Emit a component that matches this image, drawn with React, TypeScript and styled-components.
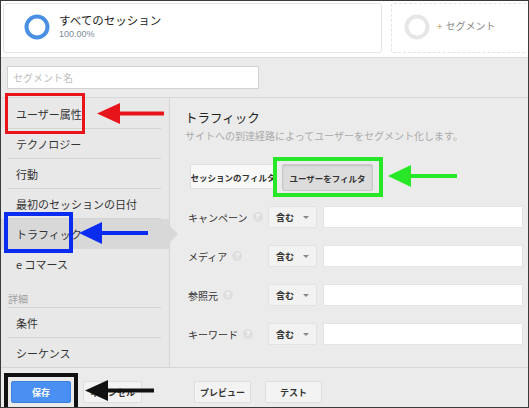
import React from "react";
import styled, { createGlobalStyle, css } from "styled-components";

const Global = createGlobalStyle`
  * { box-sizing: border-box; }
  html, body { margin: 0; padding: 0; background: #fff; }
  body { font-family: "Noto Sans CJK JP", "Noto Sans", sans-serif; }
`;

const Frame = styled.div`
  position: relative;
  width: 529px;
  height: 408px;
  border: 1px solid #3a3a3a;
  background: #ebebeb;
  overflow: hidden;
  display: flex;
  flex-direction: column;
  color: #333;
`;

const Header = styled.div`
  height: 57px;
  flex: none;
  background: #fff;
  border-bottom: 1px solid #dcdcdc;
  padding: 2px 0 4px 2px;
  display: flex;
  gap: 9px;
`;

const SegmentCard = styled.div<{ $add?: boolean }>`
  display: flex;
  align-items: center;
  gap: 9px;
  padding: 0 0 2px 20px;
  border-radius: 3px;
  ${(p) =>
    p.$add
      ? css`
          flex: 1;
          border: 1px dashed #e2e2e2;
          border-right: none;
          padding-left: 12px;
          gap: 7px;
        `
      : css`
          flex: 0 0 379px;
          border: 1px solid #e4e4e4;
          padding-left: 20px;
        `}
`;

const Ring = styled.svg`
  flex: none;
  display: block;
`;

const CardText = styled.div`
  display: flex;
  flex-direction: column;
  margin-top: -2px;
`;

const CardTitle = styled.div`
  font-size: 11.5px;
  line-height: 15px;
  color: #222;
`;

const CardSub = styled.div`
  font-family: "Liberation Sans", Arial, sans-serif;
  font-size: 9px;
  line-height: 12px;
  color: #7a8a99;
`;

const AddText = styled.div`
  font-size: 10px;
  color: #888;
  margin-top: -4px;
  span {
    color: #c9a47a;
    margin-right: 3px;
  }
`;

const NameRow = styled.div`
  flex: none;
  padding: 8px 6px;
`;

const NameInput = styled.div`
  width: 252px;
  height: 23px;
  background: #fff;
  border: 1px solid #d2d2d2;
  font-size: 10px;
  line-height: 21px;
  color: #bbb;
  padding-left: 5px;
`;

const Main = styled.div`
  flex: none;
  height: 270px;
  border-top: 1px solid #d6d6d6;
  display: flex;
`;

const Sidebar = styled.div`
  position: relative;
  z-index: 1;
  width: 169px;
  flex: none;
  background: #e8e8e8;
  border-right: 1px solid #d6d6d6;
  padding-top: 1px;
`;

const SideItem = styled.div<{ $active?: boolean }>`
  position: relative;
  height: 30px;
  padding: 0 8px 0 7px;
  display: flex;
  ${(p) =>
    p.$active &&
    css`
      background: #d8d8d8;
      &::after {
        content: "";
        position: absolute;
        top: 7px;
        right: -9px;
        border-left: 8px solid #d8d8d8;
        border-top: 8px solid transparent;
        border-bottom: 8px solid transparent;
      }
    `}
`;

const SideLabel = styled.div<{ $last?: boolean }>`
  flex: 1;
  display: flex;
  align-items: center;
  padding-left: 8px;
  font-size: 11px;
  color: #333;
  border-bottom: 1px solid ${(p) => (p.$last ? "transparent" : "#d4d4d4")};
`;

const SideSection = styled.div`
  margin: 6px 8px 0 7px;
  height: 23px;
  display: flex;
  align-items: flex-end;
  padding-bottom: 1px;
  font-size: 10px;
  color: #a0a0a0;
  border-bottom: 1px solid #d4d4d4;
`;

const Content = styled.div`
  flex: 1;
  background: #ebebeb;
  padding: 11px 5px 0 15px;
`;

const Title = styled.div`
  font-size: 12.5px;
  line-height: 17px;
  color: #222;
`;

const Subtitle = styled.div`
  margin-top: 3px;
  font-size: 10px;
  line-height: 14px;
  color: #aaa;
`;

const Toggle = styled.div`
  margin: 21px 0 0 5px;
  display: flex;
  align-items: flex-start;
  gap: 6px;
`;

const ToggleBtn = styled.div<{ $on?: boolean; $w: number }>`
  width: ${(p) => p.$w}px;
  height: ${(p) => (p.$on ? 27 : 25)}px;
  display: flex;
  align-items: center;
  justify-content: center;
  font-size: 8.5px;
  font-weight: 700;
  color: #333;
  border: 1px solid ${(p) => (p.$on ? "#c8c8c8" : "#dedede")};
  border-radius: 2px;
  background: ${(p) => (p.$on ? "#dcdcdc" : "#f8f8f8")};
  box-shadow: ${(p) => (p.$on ? "inset 0 1px 2px rgba(0,0,0,0.12)" : "none")};
  white-space: nowrap;
  overflow: hidden;
`;

const Fields = styled.div`
  margin: 15px 0 0 3px;
  display: flex;
  flex-direction: column;
  gap: 17px;
`;

const FieldRow = styled.div`
  display: flex;
  align-items: center;
  height: 22px;
`;

const FieldLabel = styled.div`
  width: 80px;
  flex: none;
  display: flex;
  align-items: center;
  gap: 5px;
  font-size: 10px;
  color: #333;
`;

const Help = styled.span`
  width: 10px;
  height: 10px;
  border-radius: 50%;
  background: #dedede;
  color: #fff;
  font-family: "Liberation Sans", Arial, sans-serif;
  font-size: 7px;
  font-weight: 700;
  line-height: 10px;
  text-align: center;
`;

const Select = styled.div`
  width: 49px;
  height: 22px;
  flex: none;
  display: flex;
  align-items: center;
  justify-content: space-between;
  padding: 0 7px 0 7px;
  background: #f2f2f2;
  border: 1px solid #e2e2e2;
  border-radius: 2px;
  font-size: 9px;
  font-weight: 700;
  color: #333;
`;

const Caret = styled.span`
  width: 0;
  height: 0;
  border-left: 3px solid transparent;
  border-right: 3px solid transparent;
  border-top: 3px solid #888;
`;

const TextInput = styled.div`
  margin-left: 6px;
  flex: 1;
  height: 22px;
  background: #fff;
  border: 1px solid #e4e4e4;
`;

const Footer = styled.div`
  flex: 1;
  border-top: 1px solid #d6d6d6;
  padding: 13px 0 0 10px;
  display: flex;
  align-items: flex-start;
`;

const FootBtn = styled.div<{ $primary?: boolean; $w: number; $ml: number }>`
  width: ${(p) => p.$w}px;
  margin-left: ${(p) => p.$ml}px;
  height: 22px;
  display: flex;
  align-items: center;
  justify-content: center;
  font-size: 9px;
  font-weight: 700;
  border-radius: 2px;
  ${(p) =>
    p.$primary
      ? css`
          background: #4a8ff2;
          border: 1px solid #3d7fe0;
          color: #fff;
        `
      : css`
          background: #f3f3f3;
          border: 1px solid #dedede;
          color: #333;
        `}
`;

const Box = styled.div<{ $c: string; $x: number; $y: number; $w: number; $h: number; $b: number }>`
  position: absolute;
  left: ${(p) => p.$x}px;
  top: ${(p) => p.$y}px;
  width: ${(p) => p.$w}px;
  height: ${(p) => p.$h}px;
  border: ${(p) => p.$b}px solid ${(p) => p.$c};
  z-index: 5;
`;

const ArrowSvg = styled.svg<{ $x: number; $y: number }>`
  position: absolute;
  left: ${(p) => p.$x}px;
  top: ${(p) => p.$y}px;
  z-index: 5;
  overflow: visible;
`;

function Arrow({ x, y, w, h, color }: { x: number; y: number; w: number; h: number; color: string }) {
  const head = 23;
  const mid = h / 2;
  return (
    <ArrowSvg $x={x} $y={y} width={w} height={h} viewBox={`0 0 ${w} ${h}`}>
      <polygon points={`0,${mid} ${head},0 ${head},${h}`} fill={color} />
      <rect x={head - 1} y={mid - 2} width={w - head + 1} height={4} fill={color} />
    </ArrowSvg>
  );
}

const fields = ["キャンペーン", "メディア", "参照元", "キーワード"];

export default function App() {
  return (
    <>
      <Global />
      <Frame>
        <Header>
          <SegmentCard>
            <Ring width="26" height="26" viewBox="0 0 26 26">
              <circle cx="13" cy="13" r="10.5" fill="none" stroke="#4a90e2" strokeWidth="4" />
            </Ring>
            <CardText>
              <CardTitle>すべてのセッション</CardTitle>
              <CardSub>100.00%</CardSub>
            </CardText>
          </SegmentCard>
          <SegmentCard $add>
            <Ring width="26" height="26" viewBox="0 0 26 26">
              <circle cx="13" cy="13" r="10.5" fill="none" stroke="#e6e6e6" strokeWidth="4" />
            </Ring>
            <AddText>
              <span>+</span>セグメント
            </AddText>
          </SegmentCard>
        </Header>
        <NameRow>
          <NameInput>セグメント名</NameInput>
        </NameRow>
        <Main>
          <Sidebar>
            <SideItem><SideLabel>ユーザー属性</SideLabel></SideItem>
            <SideItem><SideLabel>テクノロジー</SideLabel></SideItem>
            <SideItem><SideLabel>行動</SideLabel></SideItem>
            <SideItem><SideLabel>最初のセッションの日付</SideLabel></SideItem>
            <SideItem $active><SideLabel $last>トラフィック</SideLabel></SideItem>
            <SideItem><SideLabel $last>e コマース</SideLabel></SideItem>
            <SideSection>詳細</SideSection>
            <SideItem><SideLabel>条件</SideLabel></SideItem>
            <SideItem><SideLabel $last>シーケンス</SideLabel></SideItem>
          </Sidebar>
          <Content>
            <Title>トラフィック</Title>
            <Subtitle>サイトへの到達経路によってユーザーをセグメント化します。</Subtitle>
            <Toggle>
              <ToggleBtn $w={86}>セッションのフィルタ</ToggleBtn>
              <ToggleBtn $w={91} $on>ユーザーをフィルタ</ToggleBtn>
            </Toggle>
            <Fields>
              {fields.map((f) => (
                <FieldRow key={f}>
                  <FieldLabel>
                    {f}
                    <Help>?</Help>
                  </FieldLabel>
                  <Select>
                    含む
                    <Caret />
                  </Select>
                  <TextInput />
                </FieldRow>
              ))}
            </Fields>
          </Content>
        </Main>
        <Footer>
          <FootBtn $primary $w={60} $ml={0}>保存</FootBtn>
          <FootBtn $w={59} $ml={12}>キャンセル</FootBtn>
          <FootBtn $w={57} $ml={52}>プレビュー</FootBtn>
          <FootBtn $w={57} $ml={14}>テスト</FootBtn>
        </Footer>

        <Box $c="#e8141b" $x={4} $y={92} $w={80} $h={41} $b={3} />
        <Arrow x={96} y={102} w={67} h={21} color="#e8141b" />
        <Box $c="#0a2cf0" $x={3} $y={211} $w={69} $h={41} $b={4} />
        <Arrow x={78} y={221} w={69} h={22} color="#0a2cf0" />
        <Box $c="#27e827" $x={272} $y={156} $w={110} $h={40} $b={4} />
        <Arrow x={387} y={164} w={69} h={22} color="#27e827" />
        <Box $c="#111" $x={3} $y={372} $w={74} $h={40} $b={4} />
        <Arrow x={84} y={379} w={69} h={21} color="#111" />
      </Frame>
    </>
  );
}
